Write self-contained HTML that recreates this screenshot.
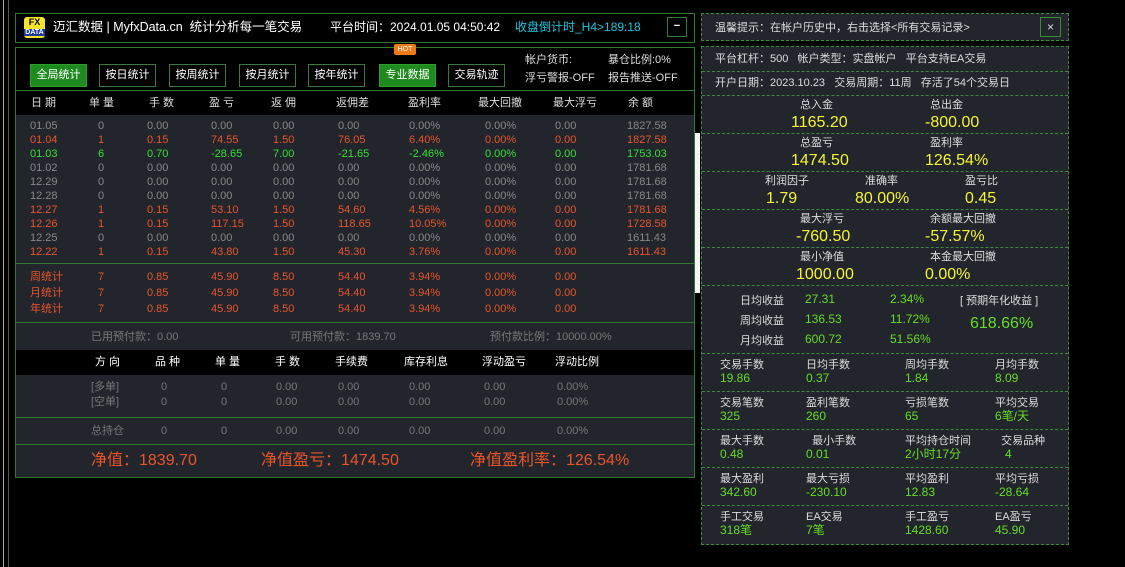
<!DOCTYPE html>
<html><head><meta charset="utf-8"><style>
*{margin:0;padding:0;box-sizing:border-box}
body{width:1125px;height:567px;background:#000;position:relative;overflow:hidden;font-family:"Liberation Sans","Noto Sans CJK SC",sans-serif;font-size:11px;color:#ddd}
.a{position:absolute;white-space:nowrap;line-height:14px}
.box{position:absolute;border:1px solid #2f7a2f}
.bg{position:absolute;background:#22252c}
.btn{position:absolute;top:64px;height:23px;width:57px;border:1px solid #3a7a3a;color:#fff;font-size:11px;text-align:center;line-height:21px;background:#000}
.btn.g{background:#1f8a1f;border-color:#2aa02a}
.o{color:#e8552a}.gr{color:#33e033}.gy{color:#888}
.h{color:#ddd;font-size:11px}
.rp{position:absolute;left:701px;width:368px;background:#22252c;border:1px dashed #3b8a3b}
.y{color:#f5f531;font-size:16px}
.lg{color:#66dd22}
.w{color:#ddd}
</style></head><body>
<div style="position:absolute;left:3px;top:0;width:1px;height:567px;background:#aaa"></div>
<div style="position:absolute;left:8px;top:0;width:1px;height:567px;background:#555"></div>

<div class="box" style="left:15px;top:13px;width:680px;height:30px;background:#000"></div>
<div style="position:absolute;left:24px;top:17px;width:21px;height:21px;background:#f5e52a;border-radius:3px;color:#000;font-weight:bold;text-align:center;font-size:9px;line-height:9px;padding-top:1px">FX<br><span style="font-size:7px;background:#1a3aa0;color:#fff;padding:0 1px">DATA</span></div>
<div class="a" style="left:53px;top:20px;font-size:12.5px;color:#fff">迈汇数据 | MyfxData.cn&nbsp; 统计分析每一笔交易</div>
<div class="a" style="left:330px;top:20px;font-size:12px;color:#fff">平台时间：2024.01.05 04:50:42</div>
<div class="a" style="left:515px;top:20px;font-size:12px;color:#19c6e0">收盘倒计时_H4&gt;189:18</div>
<div style="position:absolute;left:667px;top:17px;width:20px;height:20px;border:1px solid #3a7a3a;color:#fff;text-align:center;line-height:17px;font-weight:bold">−</div>

<div class="box" style="left:15px;top:47px;width:680px;height:431px;background:#000"></div>
<div style="position:absolute;left:394px;top:44px;width:22px;height:11px;background:#f07a1a;color:#fff;font-size:7px;text-align:center;line-height:11px;border-radius:2px">HOT</div>
<div class="btn g" style="left:30px">全局统计</div>
<div class="btn" style="left:99px">按日统计</div>
<div class="btn" style="left:169px">按周统计</div>
<div class="btn" style="left:239px">按月统计</div>
<div class="btn" style="left:308px">按年统计</div>
<div class="btn g" style="left:379px">专业数据</div>
<div class="btn" style="left:448px">交易轨迹</div>
<div class="a" style="left:525px;top:53px;color:#ddd">帐户货币:</div>
<div class="a" style="left:608px;top:53px;color:#ddd">暴仓比例:0%</div>
<div class="a" style="left:525px;top:71px;color:#ddd">浮亏警报-OFF</div>
<div class="a" style="left:608px;top:71px;color:#ddd">报告推送-OFF</div>
<div style="position:absolute;left:16px;top:90px;width:678px;height:1px;background:#2f7a2f"></div>

<div class="a h" style="left:31px;top:96px">日 期</div>
<div class="a h" style="left:89px;top:96px">单 量</div>
<div class="a h" style="left:149px;top:96px">手 数</div>
<div class="a h" style="left:209px;top:96px">盈 亏</div>
<div class="a h" style="left:271px;top:96px">返 佣</div>
<div class="a h" style="left:336px;top:96px">返佣差</div>
<div class="a h" style="left:408px;top:96px">盈利率</div>
<div class="a h" style="left:478px;top:96px">最大回撤</div>
<div class="a h" style="left:553px;top:96px">最大浮亏</div>
<div class="a h" style="left:628px;top:96px">余 额</div>

<div class="bg" style="left:16px;top:115px;width:678px;height:362px"></div>
<div style="position:absolute;left:16px;top:263px;width:678px;height:1px;background:#2f7a2f"></div>
<div style="position:absolute;left:16px;top:322px;width:678px;height:1px;background:#2f7a2f"></div>
<div style="position:absolute;left:16px;top:350px;width:678px;height:25px;background:#000"></div>
<div style="position:absolute;left:16px;top:417px;width:678px;height:1px;background:#2f7a2f"></div>
<div style="position:absolute;left:16px;top:444px;width:678px;height:1px;background:#2f7a2f"></div>
<div style="position:absolute;left:695px;top:133px;width:5px;height:160px;background:#f4f4f4"></div>

<div id="rows"></div>
<script>
var cols=[30,98,147,211,273,338,409,485,555,627];
var d=[
['gy','01.05','0','0.00','0.00','0.00','0.00','0.00%','0.00%','0.00','1827.58'],
['o','01.04','1','0.15','74.55','1.50','76.05','6.40%','0.00%','0.00','1827.58'],
['gr','01.03','6','0.70','-28.65','7.00','-21.65','-2.46%','0.00%','0.00','1753.03'],
['gy','01.02','0','0.00','0.00','0.00','0.00','0.00%','0.00%','0.00','1781.68'],
['gy','12.29','0','0.00','0.00','0.00','0.00','0.00%','0.00%','0.00','1781.68'],
['gy','12.28','0','0.00','0.00','0.00','0.00','0.00%','0.00%','0.00','1781.68'],
['o','12.27','1','0.15','53.10','1.50','54.60','4.56%','0.00%','0.00','1781.68'],
['o','12.26','1','0.15','117.15','1.50','118.65','10.05%','0.00%','0.00','1728.58'],
['gy','12.25','0','0.00','0.00','0.00','0.00','0.00%','0.00%','0.00','1611.43'],
['o','12.22','1','0.15','43.80','1.50','45.30','3.76%','0.00%','0.00','1611.43']];
var h='';
d.forEach(function(r,i){for(var c=0;c<10;c++)h+='<div class="a '+r[0]+'" style="left:'+cols[c]+'px;top:'+(119+i*14)+'px">'+r[c+1]+'</div>';});
var s=[['周统计',270],['月统计',286],['年统计',302]];
s.forEach(function(r){var v=[r[0],'7','0.85','45.90','8.50','54.40','3.94%','0.00%','0.00'];for(var c=0;c<9;c++)h+='<div class="a o" style="left:'+cols[c]+'px;top:'+r[1]+'px">'+v[c]+'</div>';});
var pc=[91,161,221,276,338,409,484,557];
[['[多单]',380],['[空单]',395],['总持仓',424]].forEach(function(r){var v=[r[0],'0','0','0.00','0.00','0.00','0.00','0.00%'];for(var c=0;c<8;c++)h+='<div class="a" style="color:#777;left:'+pc[c]+'px;top:'+r[1]+'px">'+v[c]+'</div>';});
document.getElementById('rows').innerHTML=h;
</script>

<div class="a" style="left:91px;top:330px;color:#777">已用预付款：0.00</div>
<div class="a" style="left:290px;top:330px;color:#777">可用预付款：1839.70</div>
<div class="a" style="left:490px;top:330px;color:#777">预付款比例：10000.00%</div>

<div class="a" style="left:95px;top:355px;color:#fff">方 向</div>
<div class="a" style="left:155px;top:355px;color:#fff">品 种</div>
<div class="a" style="left:215px;top:355px;color:#fff">单 量</div>
<div class="a" style="left:275px;top:355px;color:#fff">手 数</div>
<div class="a" style="left:335px;top:355px;color:#fff">手续费</div>
<div class="a" style="left:404px;top:355px;color:#fff">库存利息</div>
<div class="a" style="left:482px;top:355px;color:#fff">浮动盈亏</div>
<div class="a" style="left:555px;top:355px;color:#fff">浮动比例</div>

<div class="a o" style="left:91px;top:451px;font-size:16px;line-height:20px">净值：1839.70</div>
<div class="a o" style="left:261px;top:451px;font-size:16px;line-height:20px">净值盈亏：1474.50</div>
<div class="a o" style="left:470px;top:451px;font-size:16px;line-height:20px">净值盈利率：126.54%</div>

<div class="rp" style="top:13px;height:28px"></div>
<div class="a w" style="left:715px;top:21px">温馨提示：在帐户历史中，右击选择&lt;所有交易记录&gt;</div>
<div style="position:absolute;left:1040px;top:17px;width:21px;height:20px;border:1px solid #3a8a3a;color:#ddd;text-align:center;line-height:18px;font-size:12px">×</div>

<div class="rp" style="top:46px;height:499px"></div>
<div id="rsep"></div>
<script>
var ys=[71,95,133,171,209,247,285,353,391,429,467,505],h2='';
ys.forEach(function(y){h2+='<div style="position:absolute;left:702px;top:'+y+'px;width:366px;border-top:1px dashed #3b8a3b"></div>';});
document.getElementById('rsep').innerHTML=h2;
</script>
<div class="a w" style="left:715px;top:52px">平台杠杆：500 &nbsp;&nbsp;帐户类型：实盘帐户 &nbsp;&nbsp;平台支持EA交易</div>
<div class="a w" style="left:715px;top:76px">开户日期：2023.10.23 &nbsp;&nbsp;交易周期：11周 &nbsp;&nbsp;存活了54个交易日</div>

<div class="a w" style="left:800px;top:98px">总入金</div><div class="a y" style="left:791px;top:114px;line-height:18px">1165.20</div>
<div class="a w" style="left:930px;top:98px">总出金</div><div class="a y" style="left:925px;top:114px;line-height:18px">-800.00</div>
<div class="a w" style="left:800px;top:136px">总盈亏</div><div class="a y" style="left:791px;top:152px;line-height:18px">1474.50</div>
<div class="a w" style="left:930px;top:136px">盈利率</div><div class="a y" style="left:925px;top:152px;line-height:18px">126.54%</div>
<div class="a w" style="left:765px;top:174px">利润因子</div><div class="a y" style="left:766px;top:190px;line-height:18px">1.79</div>
<div class="a w" style="left:865px;top:174px">准确率</div><div class="a y" style="left:855px;top:190px;line-height:18px">80.00%</div>
<div class="a w" style="left:965px;top:174px">盈亏比</div><div class="a y" style="left:965px;top:190px;line-height:18px">0.45</div>
<div class="a w" style="left:800px;top:212px">最大浮亏</div><div class="a y" style="left:796px;top:228px;line-height:18px">-760.50</div>
<div class="a w" style="left:930px;top:212px">余额最大回撤</div><div class="a y" style="left:925px;top:228px;line-height:18px">-57.57%</div>
<div class="a w" style="left:800px;top:250px">最小净值</div><div class="a y" style="left:796px;top:266px;line-height:18px">1000.00</div>
<div class="a w" style="left:930px;top:250px">本金最大回撤</div><div class="a y" style="left:925px;top:266px;line-height:18px">0.00%</div>

<div class="a w" style="left:740px;top:294px">日均收益</div><div class="a lg" style="left:805px;top:292px;font-size:12px">27.31</div><div class="a lg" style="left:890px;top:292px;font-size:12px">2.34%</div>
<div class="a w" style="left:740px;top:314px">周均收益</div><div class="a lg" style="left:805px;top:312px;font-size:12px">136.53</div><div class="a lg" style="left:890px;top:312px;font-size:12px">11.72%</div>
<div class="a w" style="left:740px;top:334px">月均收益</div><div class="a lg" style="left:805px;top:332px;font-size:12px">600.72</div><div class="a lg" style="left:890px;top:332px;font-size:12px">51.56%</div>
<div class="a w" style="left:960px;top:294px">[ 预期年化收益 ]</div>
<div class="a lg" style="left:970px;top:314px;font-size:16px;line-height:20px">618.66%</div>

<div id="grid"></div>
<script>
var g=[
[[ '交易手数','19.86'],['日均手数','0.37'],['周均手数','1.84'],['月均手数','8.09']],
[[ '交易笔数','325'],['盈利笔数','260'],['亏损笔数','65'],['平均交易','6笔/天']],
[[ '最大手数','0.48'],[' 最小手数','0.01'],['平均持仓时间','2小时17分'],[' 交易品种','&nbsp;&nbsp;&nbsp;4']],
[[ '最大盈利','342.60'],['最大亏损','-230.10'],['平均盈利','12.83'],['平均亏损','-28.64']],
[[ '手工交易','318笔'],['EA交易','7笔'],['手工盈亏','1428.60'],['EA盈亏','45.90']]];
var gx=[720,806,905,995],h3='';
g.forEach(function(r,i){var y=358+i*38;r.forEach(function(c,j){h3+='<div class="a w" style="left:'+gx[j]+'px;top:'+y+'px">'+c[0].replace(' ','&nbsp;&nbsp;')+'</div><div class="a lg" style="left:'+gx[j]+'px;top:'+(y+13)+'px;font-size:12px">'+c[1]+'</div>';});});
document.getElementById('grid').innerHTML=h3;
</script>
</body></html>
